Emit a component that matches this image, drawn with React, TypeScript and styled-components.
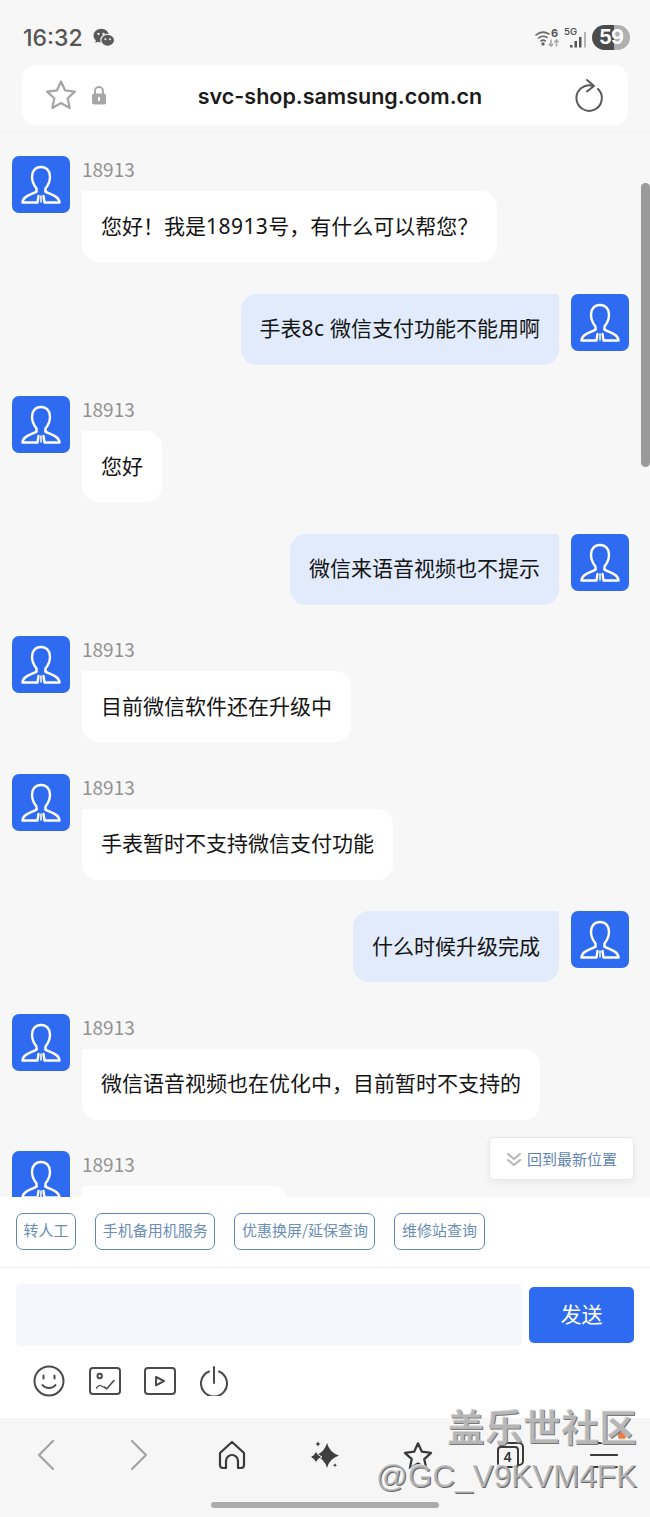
import React from "react";
import styled, { createGlobalStyle } from "styled-components";

const CJK = `"Noto Sans CJK SC", "Noto Sans", sans-serif`;

const GlobalStyle = createGlobalStyle`
  html, body {
    margin: 0;
    padding: 0;
    background: #f7f7f7;
  }
  * {
    box-sizing: border-box;
  }
`;

const Page = styled.div`
  position: relative;
  width: 650px;
  height: 1517px;
  overflow: hidden;
  display: flex;
  flex-direction: column;
  background: #f7f7f7;
  font-family: ${CJK};
`;

const StatusBar = styled.div`
  height: 65px;
  flex: none;
  padding: 10px 20px 0 23px;
  display: flex;
  align-items: center;
  justify-content: space-between;
`;

const StatusLeft = styled.div`
  display: flex;
  align-items: center;
  gap: 10px;
`;

const Clock = styled.span`
  font-family: "Inter", sans-serif;
  font-size: 23px;
  font-weight: 500;
  color: #555;
`;

const StatusRight = styled.div`
  display: flex;
  align-items: center;
  gap: 4px;
`;

const Battery = styled.div`
  width: 38px;
  height: 25px;
  border-radius: 13px;
  background: linear-gradient(90deg, #4b4b4b 0 58%, #b0b0b0 58% 100%);
  color: #fff;
  font-family: "Inter", sans-serif;
  font-size: 20px;
  font-weight: 700;
  line-height: 25px;
  text-align: center;
  letter-spacing: -1px;
`;

const AddressBar = styled.div`
  flex: none;
  height: 60px;
  margin: 0 22px;
  padding: 0 22px;
  background: #fff;
  border-radius: 14px;
  display: flex;
  align-items: center;
  justify-content: space-between;
`;

const AddressIcons = styled.div`
  width: 92px;
  display: flex;
  align-items: center;
  gap: 13px;
`;

const Url = styled.div`
  padding-top: 2px;
  font-family: "Inter", sans-serif;
  font-size: 21.5px;
  font-weight: 600;
  color: #1b1b1b;
`;

const ReloadSlot = styled.div`
  width: 62px;
  display: flex;
  justify-content: flex-end;
  padding-right: 2px;
`;

const ChatArea = styled.div`
  position: relative;
  flex: none;
  height: 1066px;
  margin-top: 6px;
  border-top: 1px solid #f0f0f0;
  overflow: hidden;
  padding: 24px 21px 0 12px;
  background: #f7f7f8;
  display: flex;
  flex-direction: column;
  gap: 31.5px;
`;

const Row = styled.div<{ $mine?: boolean }>`
  flex: none;
  display: flex;
  gap: 12px;
  justify-content: ${(p) => (p.$mine ? "flex-end" : "flex-start")};
`;

const AvatarBox = styled.div`
  flex: none;
  width: 58px;
  height: 57px;
  border-radius: 7px;
  background: #2f6bf0;
`;

const MessageBody = styled.div`
  display: flex;
  flex-direction: column;
`;

const Sender = styled.div`
  height: 35px;
  font-size: 19px;
  line-height: 26px;
  color: #929292;
`;

const Bubble = styled.div<{ $mine?: boolean; $width?: number }>`
  height: 71px;
  width: ${(p) => (p.$width ? `${p.$width}px` : "auto")};
  padding: 0 19px 4px;
  display: flex;
  align-items: center;
  font-family: "Noto Sans", ${CJK};
  font-size: 21px;
  color: #141414;
  white-space: pre;
  background: ${(p) => (p.$mine ? "#e1ebfb" : "#fff")};
  border-radius: ${(p) => (p.$mine ? "16px 3px 16px 16px" : "3px 16px 16px 16px")};
`;

const Latin = styled.span`
  letter-spacing: 0.45px;
`;

const ScrollThumb = styled.div`
  position: absolute;
  top: 51px;
  right: 0;
  width: 9px;
  height: 284px;
  border-radius: 5px;
  background: #9a9a9a;
`;

const LatestButton = styled.div`
  position: absolute;
  top: 1005px;
  right: 16px;
  width: 145px;
  height: 43px;
  background: #fff;
  border: 1px solid #e8e8e8;
  border-radius: 5px;
  box-shadow: 0 3px 10px rgba(0, 0, 0, 0.06);
  display: flex;
  align-items: center;
  justify-content: center;
  gap: 5px;
  font-size: 15px;
  color: #5f86b3;
`;

const Composer = styled.div`
  flex: none;
  height: 221px;
  background: #fff;
  display: flex;
  flex-direction: column;
`;

const QuickRow = styled.div`
  height: 71px;
  padding: 16px 16px 0;
  display: flex;
  gap: 19px;
  align-items: flex-start;
  border-bottom: 1px solid #efefef;
`;

const Chip = styled.div`
  height: 37px;
  padding: 0 6.6px 3px;
  border: 1.5px solid #6088b2;
  border-radius: 7px;
  display: flex;
  align-items: center;
  font-size: 15px;
  line-height: 18px;
  color: #6a8eb5;
  white-space: nowrap;
`;

const InputRow = styled.div`
  padding: 16px 16px 0;
  display: flex;
  gap: 7px;
  align-items: center;
`;

const InputBox = styled.div`
  width: 506px;
  height: 62px;
  border-radius: 5px;
  background: #f4f7fb;
`;

const SendButton = styled.div`
  width: 105px;
  height: 56px;
  padding-bottom: 5px;
  border-radius: 5px;
  background: #2f6bf0;
  color: #fff;
  font-size: 21px;
  display: flex;
  align-items: center;
  justify-content: center;
`;

const ToolRow = styled.div`
  padding: 19px 0 0 33px;
  display: flex;
  align-items: center;
  gap: 23.5px;
`;

const BottomNav = styled.div`
  position: relative;
  flex: 1;
  display: grid;
  grid-template-columns: repeat(7, 1fr);
  align-items: start;
  padding-top: 22px;
  background: #f6f6f6;
`;

const NavSlot = styled.div`
  display: flex;
  justify-content: center;
`;

const HomeBar = styled.div`
  position: absolute;
  left: 211px;
  bottom: 9px;
  width: 228px;
  height: 6px;
  border-radius: 3px;
  background: #ababab;
`;

const MenuDot = styled.div`
  position: absolute;
  left: 618px;
  top: 14px;
  width: 8px;
  height: 8px;
  border-radius: 50%;
  background: #e8804a;
`;

const TabBadge = styled.div`
  position: relative;
  width: 30px;
  height: 32px;
`;

const TabCount = styled.span`
  position: absolute;
  left: 1px;
  top: 6px;
  width: 22px;
  height: 22px;
  border: 2px solid #3a3a3a;
  border-radius: 4px;
  background: #f6f6f6;
  font-family: "Inter", sans-serif;
  font-size: 13px;
  font-weight: 600;
  line-height: 18px;
  text-align: center;
  color: #333;
`;

const TabBack = styled.span`
  position: absolute;
  left: 5px;
  top: 2px;
  width: 23px;
  height: 24px;
  border: 2px solid #3a3a3a;
  border-radius: 5px;
`;

const WatermarkTitle = styled.div`
  position: absolute;
  right: 13px;
  top: 1401px;
  font-size: 37.5px;
  font-weight: 700;
  line-height: 48px;
  letter-spacing: 0.5px;
  color: rgba(200, 200, 200, 0.8);
  text-shadow: 1px 1px 0 #777, -1px -1px 0 rgba(255, 255, 255, 0.8);
`;

const WatermarkHandle = styled.div`
  position: absolute;
  right: 13px;
  top: 1456px;
  font-family: "Liberation Sans", sans-serif;
  font-size: 31.5px;
  line-height: 40px;
  color: rgba(190, 190, 190, 0.85);
  text-shadow: 1px 1px 0 #666, -1px -1px 0 rgba(255, 255, 255, 0.8);
`;

const Avatar = () => (
  <AvatarBox>
    <svg width="58" height="57" viewBox="0 0 58 57" fill="none" stroke="#fff" strokeWidth="2.400" strokeLinecap="round" strokeLinejoin="round">
      <path d="M24.500 35.500v-3c-2.500-3-4.500-7-4.500-12C20 15 23.500 11 29 11s9 4 9 9.500c0 5-2 9-4.500 12v3" />
      <path d="M24.500 35.500c-3.500 3-13.500 3.500-14 11h15l1-6.500" />
      <path d="M33.500 35.500c3.500 3 13.500 3.500 14 11h-15l-1-6.500" />
      <path d="M29 40v6" strokeWidth="1.500" />
    </svg>
  </AvatarBox>
);

const WeChatIcon = () => (
  <svg width="22" height="19" viewBox="0 0 24 20">
    <ellipse cx="9" cy="8" rx="8.500" ry="7.500" fill="#5a5a5a" />
    <path d="M3.500 12l-1 4 4-2z" fill="#5a5a5a" />
    <ellipse cx="16" cy="13" rx="7.500" ry="6.500" fill="#5a5a5a" stroke="#f7f7f7" strokeWidth="1.200" />
    <circle cx="6" cy="6" r="1.300" fill="#f7f7f7" />
    <circle cx="11.500" cy="6" r="1.300" fill="#f7f7f7" />
    <circle cx="13.500" cy="12" r="1.100" fill="#f7f7f7" />
    <circle cx="18.500" cy="12" r="1.100" fill="#f7f7f7" />
  </svg>
);

const WifiIcon = () => (
  <svg width="25" height="22" viewBox="0 0 25 22" fill="none" stroke="#666" strokeWidth="1.600" strokeLinecap="round">
    <path d="M1 8c4-3.500 9-3.500 13-1" />
    <path d="M3.500 11c2.500-2 6-2 8.500-.5" />
    <path d="M6 14c1.300-1 3-1 4.300 0" />
    <circle cx="8" cy="17" r="0.900" fill="#666" />
    <path d="M16 13v6m-1.800-1.800L16 19l1.800-1.800" stroke="#aaa" />
    <path d="M21.500 19v-6m-1.800 1.800L21.500 13l1.800 1.800" stroke="#aaa" />
    <text x="16" y="10" fontFamily="Inter, sans-serif" fontSize="11" fontWeight="700" fill="#555" stroke="none">6</text>
  </svg>
);

const SignalIcon = () => (
  <svg width="24" height="24" viewBox="0 0 24 24">
    <text x="0" y="9" fontFamily="Inter, sans-serif" fontSize="9.500" fontWeight="600" fill="#555">5G</text>
    <rect x="6" y="19" width="2.500" height="2.500" fill="#555" />
    <rect x="10.500" y="15" width="2.500" height="6.500" fill="#555" />
    <rect x="15" y="11" width="2.500" height="10.500" fill="#555" />
    <rect x="20" y="6" width="2" height="15.500" fill="#b5b5b5" />
  </svg>
);

const StarOutline = ({ color, size, width }: { color: string; size: number; width: number }) => (
  <svg width={size} height={size} viewBox="0 0 24 24" fill="none" stroke={color} strokeWidth={width} strokeLinejoin="round">
    <path d="M12 2.500l2.900 6.300 6.900.8-5.100 4.700 1.400 6.800-6.100-3.400-6.100 3.400 1.400-6.800-5.100-4.700 6.900-.8z" />
  </svg>
);

const LockIcon = () => (
  <svg width="16" height="21" viewBox="0 0 16 21">
    <path d="M4 9V6a4 4 0 0 1 8 0v3" fill="none" stroke="#a8a8a8" strokeWidth="2" />
    <rect x="1" y="8.500" width="14" height="11" rx="2" fill="#a8a8a8" />
    <rect x="7" y="12" width="2" height="4" fill="#fff" />
  </svg>
);

const ReloadIcon = () => (
  <svg width="30" height="34" viewBox="0 0 30 34" fill="none" stroke="#5a5a5a" strokeWidth="2" strokeLinecap="round" strokeLinejoin="round">
    <path d="M24 11a12.700 12.700 0 1 1-5-3" />
    <path d="M13 2l7 6-7 5.500" />
  </svg>
);

const ChevronDouble = () => (
  <svg width="16" height="16" viewBox="0 0 16 16" fill="none" stroke="#b5b5b5" strokeWidth="2" strokeLinecap="round" strokeLinejoin="round">
    <path d="M2 3l6 5 6-5" />
    <path d="M2 9l6 5 6-5" />
  </svg>
);

const toolStroke = { fill: "none", stroke: "#4a4a4a", strokeWidth: 2, strokeLinecap: "round", strokeLinejoin: "round" } as const;

const SmileIcon = () => (
  <svg width="32" height="32" viewBox="0 0 32 32" {...toolStroke}>
    <circle cx="16" cy="16" r="14.500" />
    <path d="M10.500 10.500v3M21.500 10.500v3" />
    <path d="M9.500 20c3 4 10 4 13 0" />
  </svg>
);

const ImageIcon = () => (
  <svg width="32" height="28" viewBox="0 0 32 28" {...toolStroke}>
    <rect x="1" y="1" width="30" height="26" rx="3" />
    <circle cx="10.700" cy="9" r="2.200" />
    <path d="M7.500 21c2-2.500 3-3 4.200-2.500l2.300 1.500" strokeWidth="1.300" />
    <path d="M15 20l2.700 1.700L25 13.500" strokeWidth="1.600" />
  </svg>
);

const VideoIcon = () => (
  <svg width="32" height="28" viewBox="0 0 32 28" {...toolStroke}>
    <rect x="1" y="1" width="30" height="26" rx="3" />
    <path d="M12 10l8 4-8 4.300z" />
  </svg>
);

const PowerIcon = () => (
  <svg width="28" height="30" viewBox="0 0 28 30" {...toolStroke}>
    <path d="M9 5.500a13 13 0 1 0 10 0" />
    <path d="M14 1v16" />
  </svg>
);

const ChevronNav = ({ flip }: { flip?: boolean }) => (
  <svg width="16" height="30" viewBox="0 0 16 30" fill="none" stroke="#a3a3a3" strokeWidth="2.200" strokeLinecap="round" strokeLinejoin="round">
    <path d={flip ? "M1 1l14 14L1 29" : "M15 1L1 15l14 14"} />
  </svg>
);

const HomeIcon = () => (
  <svg width="28" height="30" viewBox="0 0 28 30" fill="none" stroke="#3a3a3a" strokeWidth="2.200" strokeLinejoin="round">
    <path d="M2 13L14 2l12 11v12a3 3 0 0 1-3 3h-3v-7a5 5 0 0 0-12 0v7H5a3 3 0 0 1-3-3z" />
  </svg>
);

const SparkleIcon = () => (
  <svg width="30" height="30" viewBox="0 0 30 30" fill="#3f3f3f">
    <path d="M17 3Q19.500 12.500 29 15.500 19.500 18.500 17 28 14.500 18.500 5 15.500 14.500 12.500 17 3z" />
    <path d="M6 11Q7.500 15.500 12 17 7.500 18.500 6 23 4.500 18.500 0 17 4.500 15.500 6 11z" stroke="#f6f6f6" strokeWidth="1" />
    <path d="M8 1c.4 2 1 2.600 3 3-2 .4-2.600 1-3 3-.4-2-1-2.600-3-3 2-.4 2.600-1 3-3z" />
    <path d="M25 23c.3 1.500.8 2 2.300 2.300-1.500.3-2 .8-2.300 2.300-.3-1.500-.8-2-2.300-2.300 1.500-.3 2-.8 2.300-2.300z" />
  </svg>
);

const MenuIcon = () => (
  <svg width="28" height="30" viewBox="0 0 28 30" fill="none" stroke="#3a3a3a" strokeWidth="2.200" strokeLinecap="round">
    <path d="M1 3h26M1 15h26M1 27h26" />
  </svg>
);

type Message = { text: string; mine?: boolean; width?: number };

const messages: Message[] = [
  { text: "您好！我是18913号，有什么可以帮您？" },
  { text: "手表8c 微信支付功能不能用啊", mine: true },
  { text: "您好" },
  { text: "微信来语音视频也不提示", mine: true },
  { text: "目前微信软件还在升级中" },
  { text: "手表暂时不支持微信支付功能" },
  { text: "什么时候升级完成", mine: true },
  { text: "微信语音视频也在优化中，目前暂时不支持的" },
  { text: "", width: 206 },
];

const chips = ["转人工", "手机备用机服务", "优惠换屏/延保查询", "维修站查询"];

const MessageText = ({ text }: { text: string }) => (
  <span>
    {text.split(/([0-9a-z]+)/).map((part, i) =>
      i % 2 ? <Latin key={i}>{part}</Latin> : part
    )}
  </span>
);

export default function App() {
  return (
    <Page>
      <GlobalStyle />
      <StatusBar>
        <StatusLeft>
          <Clock>16:32</Clock>
          <WeChatIcon />
        </StatusLeft>
        <StatusRight>
          <WifiIcon />
          <SignalIcon />
          <Battery>59</Battery>
        </StatusRight>
      </StatusBar>
      <AddressBar>
        <AddressIcons>
          <StarOutline color="#a6a6a6" size={34} width={1.6} />
          <LockIcon />
        </AddressIcons>
        <Url>svc-shop.samsung.com.cn</Url>
        <ReloadSlot>
          <ReloadIcon />
        </ReloadSlot>
      </AddressBar>
      <ChatArea>
        {messages.map((m, i) =>
          m.mine ? (
            <Row key={i} $mine>
              <Bubble $mine>
                <MessageText text={m.text} />
              </Bubble>
              <Avatar />
            </Row>
          ) : (
            <Row key={i}>
              <Avatar />
              <MessageBody>
                <Sender>18913</Sender>
                <Bubble $width={m.width}>
                  <MessageText text={m.text} />
                </Bubble>
              </MessageBody>
            </Row>
          )
        )}
        <ScrollThumb />
        <LatestButton>
          <ChevronDouble />
          回到最新位置
        </LatestButton>
      </ChatArea>
      <Composer>
        <QuickRow>
          {chips.map((c) => (
            <Chip key={c}>{c}</Chip>
          ))}
        </QuickRow>
        <InputRow>
          <InputBox />
          <SendButton>发送</SendButton>
        </InputRow>
        <ToolRow>
          <SmileIcon />
          <ImageIcon />
          <VideoIcon />
          <PowerIcon />
        </ToolRow>
      </Composer>
      <BottomNav>
        <NavSlot>
          <ChevronNav />
        </NavSlot>
        <NavSlot>
          <ChevronNav flip />
        </NavSlot>
        <NavSlot>
          <HomeIcon />
        </NavSlot>
        <NavSlot>
          <SparkleIcon />
        </NavSlot>
        <NavSlot>
          <StarOutline color="#3a3a3a" size={32} width={1.7} />
        </NavSlot>
        <NavSlot>
          <TabBadge>
            <TabBack />
            <TabCount>4</TabCount>
          </TabBadge>
        </NavSlot>
        <NavSlot>
          <MenuIcon />
        </NavSlot>
        <MenuDot />
        <HomeBar />
      </BottomNav>
      <WatermarkTitle>盖乐世社区</WatermarkTitle>
      <WatermarkHandle>@GC_V9KVM4FK</WatermarkHandle>
    </Page>
  );
}
